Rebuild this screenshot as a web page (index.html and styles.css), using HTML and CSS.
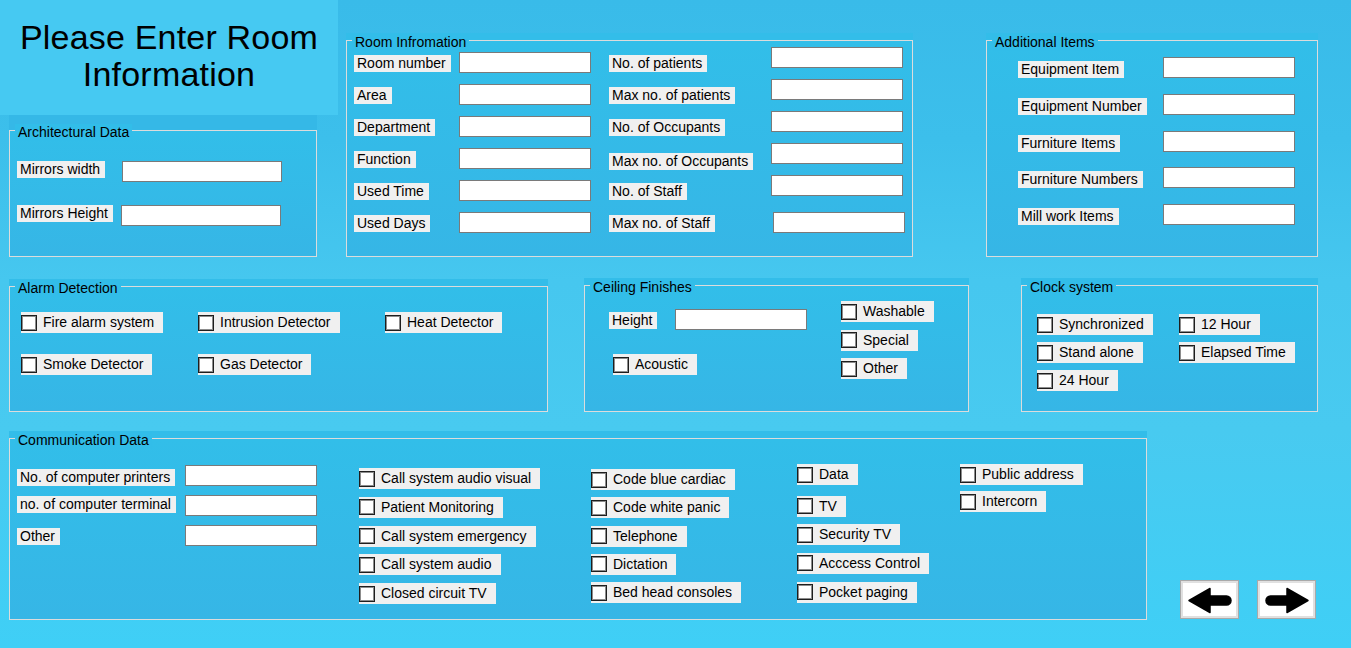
FILE: index.html
```html
<!DOCTYPE html>
<html lang="en">
<head>
<meta charset="utf-8">
<title>Room Information</title>
<link rel="stylesheet" href="styles.css">
</head>
<body>
<div class="form">
  <div class="row row-top">
    <div class="col-left">
      <div class="header">
        <h1 class="title">Please Enter Room<br>Information</h1>
      </div>
      <section class="group g-arch">
        <div class="legend">Architectural Data</div>
        <div class="arch-body">
          <span class="lbl">Mirrors width</span><input class="tb tb-wide" type="text">
          <span class="lbl">Mirrors Height</span><input class="tb tb-wide nudge-l" type="text">
        </div>
      </section>
    </div>

    <section class="group g-room">
      <div class="legend">Room Infromation</div>
      <div class="room-body">
        <span class="lbl la">Room number</span><input class="tb ta" type="text"><span class="lbl lb">No. of patients</span><input class="tb tbb" type="text">
        <span class="lbl la">Area</span><input class="tb ta" type="text"><span class="lbl lb">Max no. of patients</span><input class="tb tbb" type="text">
        <span class="lbl la">Department</span><input class="tb ta" type="text"><span class="lbl lb">No. of Occupants</span><input class="tb tbb" type="text">
        <span class="lbl la">Function</span><input class="tb ta" type="text"><span class="lbl lb lb-low">Max no. of Occupants</span><input class="tb tbb" type="text">
        <span class="lbl la">Used Time</span><input class="tb ta" type="text"><span class="lbl lb">No. of Staff</span><input class="tb tbb" type="text">
        <span class="lbl la">Used Days</span><input class="tb ta" type="text"><span class="lbl lb">Max no. of Staff</span><input class="tb tbb tb-last" type="text">
      </div>
    </section>

    <section class="group g-add">
      <div class="legend">Additional Items</div>
      <div class="add-body">
        <span class="lbl">Equipment Item</span><input class="tb" type="text">
        <span class="lbl">Equipment Number</span><input class="tb" type="text">
        <span class="lbl">Furniture Items</span><input class="tb" type="text">
        <span class="lbl">Furniture Numbers</span><input class="tb" type="text">
        <span class="lbl">Mill work Items</span><input class="tb" type="text">
      </div>
    </section>
  </div>

  <div class="row row-mid">
    <section class="group g-alarm">
      <div class="legend">Alarm Detection</div>
      <div class="alarm-body">
        <label class="cb"><span class="box"></span>Fire alarm system</label>
        <label class="cb"><span class="box"></span>Intrusion Detector</label>
        <label class="cb"><span class="box"></span>Heat Detector</label>
        <label class="cb"><span class="box"></span>Smoke Detector</label>
        <label class="cb"><span class="box"></span>Gas Detector</label>
      </div>
    </section>

    <section class="group g-ceil">
      <div class="legend">Ceiling Finishes</div>
      <div class="ceil-body">
        <div class="ceil-left">
          <div class="ceil-row">
            <span class="lbl">Height</span><input class="tb" type="text">
          </div>
          <label class="cb cb-acoustic"><span class="box"></span>Acoustic</label>
        </div>
        <div class="ceil-right">
          <label class="cb"><span class="box"></span>Washable</label>
          <label class="cb"><span class="box"></span>Special</label>
          <label class="cb"><span class="box"></span>Other</label>
        </div>
      </div>
    </section>

    <section class="group g-clock">
      <div class="legend">Clock system</div>
      <div class="clock-body">
        <label class="cb"><span class="box"></span>Synchronized</label>
        <label class="cb"><span class="box"></span>12 Hour</label>
        <label class="cb"><span class="box"></span>Stand alone</label>
        <label class="cb"><span class="box"></span>Elapsed Time</label>
        <label class="cb"><span class="box"></span>24 Hour</label>
      </div>
    </section>
  </div>

  <div class="row row-bot">
    <section class="group g-comm">
      <div class="legend">Communication Data</div>
      <div class="comm-body">
        <div class="ccol ca">
          <span class="lbl l1">No. of computer printers</span><input class="tb" type="text">
          <span class="lbl l2">no. of computer terminal</span><input class="tb" type="text">
          <span class="lbl l3">Other</span><input class="tb" type="text">
        </div>
        <div class="ccol cbcol cb1">
          <label class="cb"><span class="box"></span>Call system audio visual</label>
          <label class="cb"><span class="box"></span>Patient Monitoring</label>
          <label class="cb"><span class="box"></span>Call system emergency</label>
          <label class="cb"><span class="box"></span>Call system audio</label>
          <label class="cb"><span class="box"></span>Closed circuit TV</label>
        </div>
        <div class="ccol cbcol cb2">
          <label class="cb"><span class="box"></span>Code blue cardiac</label>
          <label class="cb"><span class="box"></span>Code white panic</label>
          <label class="cb"><span class="box"></span>Telephone</label>
          <label class="cb"><span class="box"></span>Dictation</label>
          <label class="cb"><span class="box"></span>Bed head consoles</label>
        </div>
        <div class="ccol cbcol cb3">
          <label class="cb"><span class="box"></span>Data</label>
          <label class="cb"><span class="box"></span>TV</label>
          <label class="cb"><span class="box"></span>Security TV</label>
          <label class="cb"><span class="box"></span>Acccess Control</label>
          <label class="cb"><span class="box"></span>Pocket paging</label>
        </div>
        <div class="ccol cbcol cb4">
          <label class="cb"><span class="box"></span>Public address</label>
          <label class="cb"><span class="box"></span>Intercorn</label>
        </div>
      </div>
    </section>

    <div class="nav">
      <button class="navbtn" type="button" aria-label="Back">
        <svg width="57" height="37" viewBox="0 0 57 37"><path d="M8 19.5 L29 7.5 L29 15 L45.5 15 A4.5 4.5 0 0 1 45.5 24 L29 24 L29 31.5 Z" fill="#000" stroke="#000" stroke-width="1.5" stroke-linejoin="round"/></svg>
      </button>
      <button class="navbtn" type="button" aria-label="Next">
        <svg width="57" height="37" viewBox="0 0 57 37"><path d="M50 19.5 L29 7.5 L29 15 L12.5 15 A4.5 4.5 0 0 0 12.5 24 L29 24 L29 31.5 Z" fill="#000" stroke="#000" stroke-width="1.5" stroke-linejoin="round"/></svg>
      </button>
    </div>
  </div>
</div>
</body>
</html>
```

FILE: styles.css
```css
html, body {
  margin: 0;
  padding: 0;
}

body {
  font-family: "Liberation Sans", Arial, sans-serif;
  font-size: 14px;
  color: #000;
  background: linear-gradient(to bottom, #39bbe9 0px, #3cbfeb 140px, #46c7ef 280px, #48caf0 430px, #3fcff6 648px);
}

.form {
  width: 1351px;
  height: 648px;
  overflow: hidden;
}

.row {
  display: flex;
  align-items: flex-start;
}

/* ---------- header ---------- */
.col-left {
  width: 338px;
  display: flex;
  flex-direction: column;
}

.header {
  height: 115px;
  background: #46c9f2;
  box-sizing: border-box;
  padding-top: 19px;
}

.title {
  margin: 0;
  font-weight: normal;
  font-size: 34px;
  line-height: 37px;
  letter-spacing: 0.2px;
  text-align: center;
}

/* ---------- generic controls ---------- */
.group {
  position: relative;
  box-sizing: border-box;
  border: 1px solid #dcdcdc;
  background: linear-gradient(to bottom, #32bee9, #36b6e6);
  box-shadow: 0 -7px 0 #33bde9;
}

.legend {
  position: absolute;
  top: -7px;
  left: 5px;
  padding: 0 3px;
  line-height: 17px;
  background: #32bde9;
  white-space: nowrap;
}

.lbl {
  display: inline-block;
  justify-self: start;
  align-self: start;
  background: #f0f0f0;
  height: 17px;
  line-height: 17px;
  padding: 0 5px 0 3px;
  white-space: nowrap;
}

.tb {
  display: block;
  box-sizing: border-box;
  width: 132px;
  height: 21px;
  margin: 0;
  padding: 0 3px;
  border: 1px solid #7a7a7a;
  background: #fff;
  font: inherit;
  outline: none;
}

.tb-wide {
  width: 160px;
}

.cb {
  display: inline-flex;
  align-items: center;
  justify-self: start;
  align-self: start;
  height: 21px;
  line-height: 21px;
  background: #f0f0f0;
  padding-right: 9px;
  white-space: nowrap;
}

.box {
  box-sizing: border-box;
  width: 16px;
  height: 16px;
  margin-right: 6px;
  background: #fff;
  border: 1px solid #1e1e1e;
  box-shadow: inset 0 0 0 1px #8c8c8c;
  flex: none;
}

/* ---------- architectural ---------- */
.g-arch {
  margin: 15px 0 0 9px;
  width: 308px;
  height: 127px;
  box-shadow: 0 -15px 0 #35b8e7;
}

.arch-body {
  display: grid;
  grid-template-columns: 105px 160px;
  row-gap: 23px;
  padding: 30px 0 0 7px;
}

.nudge-l {
  margin-left: -1px;
}

/* ---------- room information ---------- */
.g-room {
  margin: 40px 0 0 8px;
  width: 567px;
  height: 217px;
}

.room-body {
  display: grid;
  grid-template-columns: 105px 150px 162px 132px;
  grid-auto-rows: 32px;
  padding: 6px 0 0 7px;
}

.room-body .la { margin-top: 8px; }
.room-body .ta { margin-top: 5px; }
.room-body .lb { margin-top: 8px; }
.room-body .lb-low { margin-top: 10px; }
.room-body .tbb { margin-top: 0; }
.room-body .tb-last { margin-top: 5px; margin-left: 2px; }

/* ---------- additional items ---------- */
.g-add {
  margin: 40px 0 0 73px;
  width: 332px;
  height: 217px;
}

.add-body {
  display: grid;
  grid-template-columns: 145px 132px;
  row-gap: 15.75px;
  padding: 16px 0 0 31px;
}

.add-body .lbl {
  margin-top: 4px;
}

/* ---------- middle row ---------- */
.row-mid {
  margin-top: 28px;
}

.g-alarm {
  margin: 1px 0 0 9px;
  width: 539px;
  height: 126px;
}

.alarm-body {
  display: grid;
  grid-template-columns: 177px 187px auto;
  row-gap: 21px;
  padding: 25px 0 0 11px;
}

.g-ceil {
  margin-left: 36px;
  width: 385px;
  height: 127px;
}

.ceil-body {
  display: flex;
}

.ceil-left {
  width: 256px;
  box-sizing: border-box;
  padding: 23px 0 0 24px;
  display: flex;
  flex-direction: column;
  align-items: flex-start;
}

.ceil-row {
  display: grid;
  grid-template-columns: 66px 132px;
}

.ceil-row .lbl {
  margin-top: 3px;
}

.cb-acoustic {
  margin: 24px 0 0 4px;
}

.ceil-right {
  padding-top: 15px;
  display: flex;
  flex-direction: column;
  align-items: flex-start;
  gap: 7.5px;
}

.g-clock {
  margin-left: 52px;
  width: 297px;
  height: 127px;
}

.clock-body {
  display: grid;
  grid-template-columns: 142px auto;
  row-gap: 7px;
  padding: 28px 0 0 15px;
}

/* ---------- communication ---------- */
.row-bot {
  margin-top: 26px;
}

.g-comm {
  margin-left: 9px;
  width: 1138px;
  height: 182px;
}

.comm-body {
  display: flex;
  align-items: flex-start;
  padding: 25px 0 0 7px;
}

.ccol {
  flex: none;
}

.ca {
  width: 342px;
  margin-top: 1px;
  display: grid;
  grid-template-columns: 168px 132px;
  row-gap: 9px;
}

.ca .l1 { margin-top: 4px; }
.ca .l2 { margin-top: 1px; }
.ca .l3 { margin-top: 3px; }

.cbcol {
  display: flex;
  flex-direction: column;
  align-items: flex-start;
}

.cb1 {
  width: 232px;
  margin-top: 4px;
  gap: 7.75px;
}

.cb2 {
  width: 206px;
  margin-top: 5px;
  gap: 7.25px;
}

.cb3 {
  width: 163px;
  gap: 7.67px;
}

.cb3 .cb:first-child {
  margin-bottom: 3px;
}

.cb4 {
  gap: 6px;
}

/* ---------- navigation ---------- */
.nav {
  align-self: flex-end;
  display: flex;
  gap: 18px;
  margin: 0 0 1px 33px;
}

.navbtn {
  box-sizing: border-box;
  width: 59px;
  height: 39px;
  margin: 0;
  padding: 0;
  border: 1px solid #a9a9a9;
  background: #fff;
  box-shadow: inset 0 0 0 2px #e0e0e0;
  display: flex;
  align-items: center;
  justify-content: center;
}

.navbtn svg {
  display: block;
}
```
